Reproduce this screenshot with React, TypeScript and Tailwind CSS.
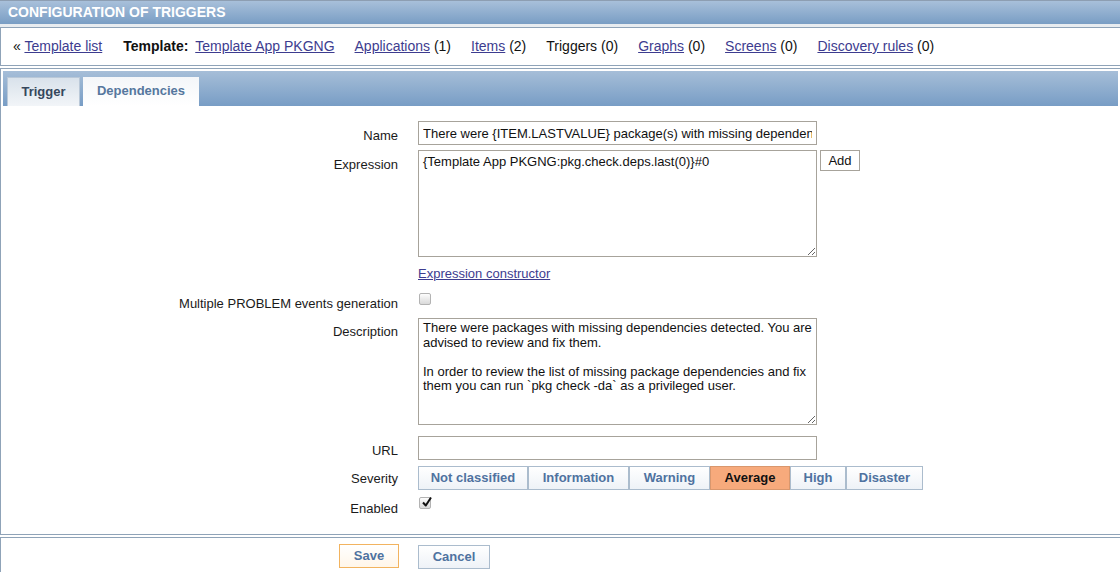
import React from "react";

const linkCls = "text-[#3d3c8f] underline";

const NavItem = ({ label, count }: { label: string; count?: string }) => (
  <span className="mr-[20px]">
    <a className={linkCls} href="#">
      {label}
    </a>
    {count && <span> {count}</span>}
  </span>
);

const Checkbox = ({ checked }: { checked?: boolean }) => (
  <span className="relative inline-block w-[12px] h-[12px] rounded-[2px] border border-[#b3b3b3] bg-linear-to-b from-[#fdfdfd] to-[#d9d9d9]">
    {checked && (
      <svg
        className="absolute -top-[2px] left-[1px]"
        width="12"
        height="12"
        viewBox="0 0 12 12"
      >
        <path
          d="M2 6.5 L4.8 9.5 L10 1.5"
          fill="none"
          stroke="#111"
          strokeWidth="2"
          strokeLinejoin="round"
        />
      </svg>
    )}
  </span>
);

const Row = ({
  label,
  labelPad = "pt-[7px]",
  className = "",
  children,
}: {
  label?: string;
  labelPad?: string;
  className?: string;
  children: React.ReactNode;
}) => (
  <div className={`flex items-start ${className}`}>
    <div
      className={`w-[395px] shrink-0 text-right text-[13px] leading-[15px] text-[#1a1a1a] ${labelPad}`}
    >
      {label}
    </div>
    <div className="ml-5 flex items-start">{children}</div>
  </div>
);

const severities = [
  { label: "Not classified", w: "w-[110px]" },
  { label: "Information", w: "w-[101px]" },
  { label: "Warning", w: "w-[81px]" },
  { label: "Average", w: "w-[80px]", active: true },
  { label: "High", w: "w-[56px]" },
  { label: "Disaster", w: "w-[77px]" },
];

const btnCls =
  "h-[24px] border text-[13px] font-bold leading-[22px] text-center";

export default function App() {
  return (
    <div className="w-[1120px] h-[572px] overflow-hidden bg-white font-['Liberation_Sans',Arial,sans-serif] text-black">
      <div className="h-[24px] border-t border-[#8d9eb2] bg-linear-to-b from-[#a8c0da] to-[#799dc4] pl-2 text-[14px] font-bold leading-[22px] text-white">
        CONFIGURATION OF TRIGGERS
      </div>
      <div className="h-[3px] bg-[#e8ecf0]" />

      <div className="h-[39px] border-y border-l border-[#8fa3b8] flex items-center pl-[12px] text-[14px] text-[#111]">
        <span className="mr-[21px]">
          «{" "}
          <a className={linkCls} href="#">
            Template list
          </a>
        </span>
        <span className="mr-[20px]">
          <b>Template:</b>{" "}
          <a className={`${linkCls} ml-[3px]`} href="#">
            Template App PKGNG
          </a>
        </span>
        <NavItem label="Applications" count="(1)" />
        <NavItem label="Items" count="(2)" />
        <span className="mr-[20px]">Triggers (0)</span>
        <NavItem label="Graphs" count="(0)" />
        <NavItem label="Screens" count="(0)" />
        <NavItem label="Discovery rules" count="(0)" />
      </div>

      <div className="mt-[2px] border-y border-l border-[#8fa3b8] px-[2px] pt-[2px] pb-[18px]">
        <div className="h-[35px] bg-linear-to-b from-[#a6bed8] to-[#789dc5] flex items-end pl-[4px] gap-[3px]">
          <div className="h-[29px] w-[73px] border border-b-0 border-[#b9c8d8] bg-linear-to-b from-[#d9e2eb] to-[#f2f5f8] text-center text-[13px] font-bold leading-[28px] text-[#36475c]">
            Trigger
          </div>
          <div className="h-[29px] w-[116px] bg-linear-to-b from-[#f4f6f9] to-[#ffffff] text-center text-[13px] font-bold leading-[28px] text-[#56779e]">
            Dependencies
          </div>
        </div>

        <div className="pt-[15px]">
          <Row label="Name">
            <input
              readOnly
              value="There were {ITEM.LASTVALUE} package(s) with missing dependencies"
              className="w-[399px] h-[24px] border border-[#a7a39b] px-[4px] text-[13px] text-[#111] outline-none"
            />
          </Row>
          <Row label="Expression" className="mt-[5px]">
            <textarea
              readOnly
              defaultValue="{Template App PKGNG:pkg.check.deps.last(0)}#0"
              className="w-[399px] h-[107px] border border-[#a7a39b] px-[4px] py-[3px] text-[13px] leading-[15px] text-[#111] outline-none"
            />
            <button className="ml-[3px] h-[21px] w-[40px] border border-[#a7a39b] bg-white text-[13px] leading-[19px] text-[#111]">
              Add
            </button>
          </Row>
          <Row className="mt-[9px]" labelPad="">
            <a className={`${linkCls} text-[13px] leading-[15px]`} href="#">
              Expression constructor
            </a>
          </Row>
          <Row label="Multiple PROBLEM events generation" className="mt-[9px]" labelPad="pt-[6px]">
            <span className="mt-[3px] ml-[1px] flex">
              <Checkbox />
            </span>
          </Row>
          <Row label="Description" className="mt-[7px]" labelPad="pt-[6px]">
            <textarea
              readOnly
              defaultValue={
                "There were packages with missing dependencies detected. You are advised to review and fix them.\n\nIn order to review the list of missing package dependencies and fix them you can run `pkg check -da` as a privileged user."
              }
              className="w-[399px] h-[107px] border border-[#a7a39b] px-[4px] py-[2px] text-[13px] leading-[14.5px] text-[#111] outline-none resize"
            />
          </Row>
          <Row label="URL" className="mt-[11px]">
            <input
              readOnly
              value=""
              className="w-[399px] h-[24px] border border-[#a7a39b] px-[4px] text-[13px] outline-none"
            />
          </Row>
          <Row label="Severity" className="mt-[6px]" labelPad="pt-[5px]">
            <div className="flex">
              {severities.map((s) => (
                <div
                  key={s.label}
                  className={`${btnCls} ${s.w} ${
                    s.active
                      ? "border-[#d9976d] bg-[#f7aa7c] text-[#111]"
                      : "border-[#abbccd] bg-linear-to-b from-[#ffffff] to-[#eef2f7] text-[#4f72a0]"
                  }`}
                >
                  {s.label}
                </div>
              ))}
            </div>
          </Row>
          <Row label="Enabled" className="mt-[5px]" labelPad="pt-[6px]">
            <span className="mt-[2px] ml-[1px] flex">
              <Checkbox checked />
            </span>
          </Row>
        </div>
      </div>

      <div className="mt-[2px] h-[40px] border-t border-l border-[#8fa3b8] pt-[6px] flex">
        <div className="w-[398px] flex justify-end">
          <button
            className={`${btnCls} w-[60px] border-[#f2b35f] bg-linear-to-b from-[#ffffff] to-[#fff6ea] text-[#4f72a0]`}
          >
            Save
          </button>
        </div>
        <div className="ml-[19px]">
          <button
            className={`${btnCls} w-[72px] border-[#abbccd] bg-linear-to-b from-[#ffffff] to-[#eef2f7] text-[#4f72a0]`}
          >
            Cancel
          </button>
        </div>
      </div>
    </div>
  );
}
